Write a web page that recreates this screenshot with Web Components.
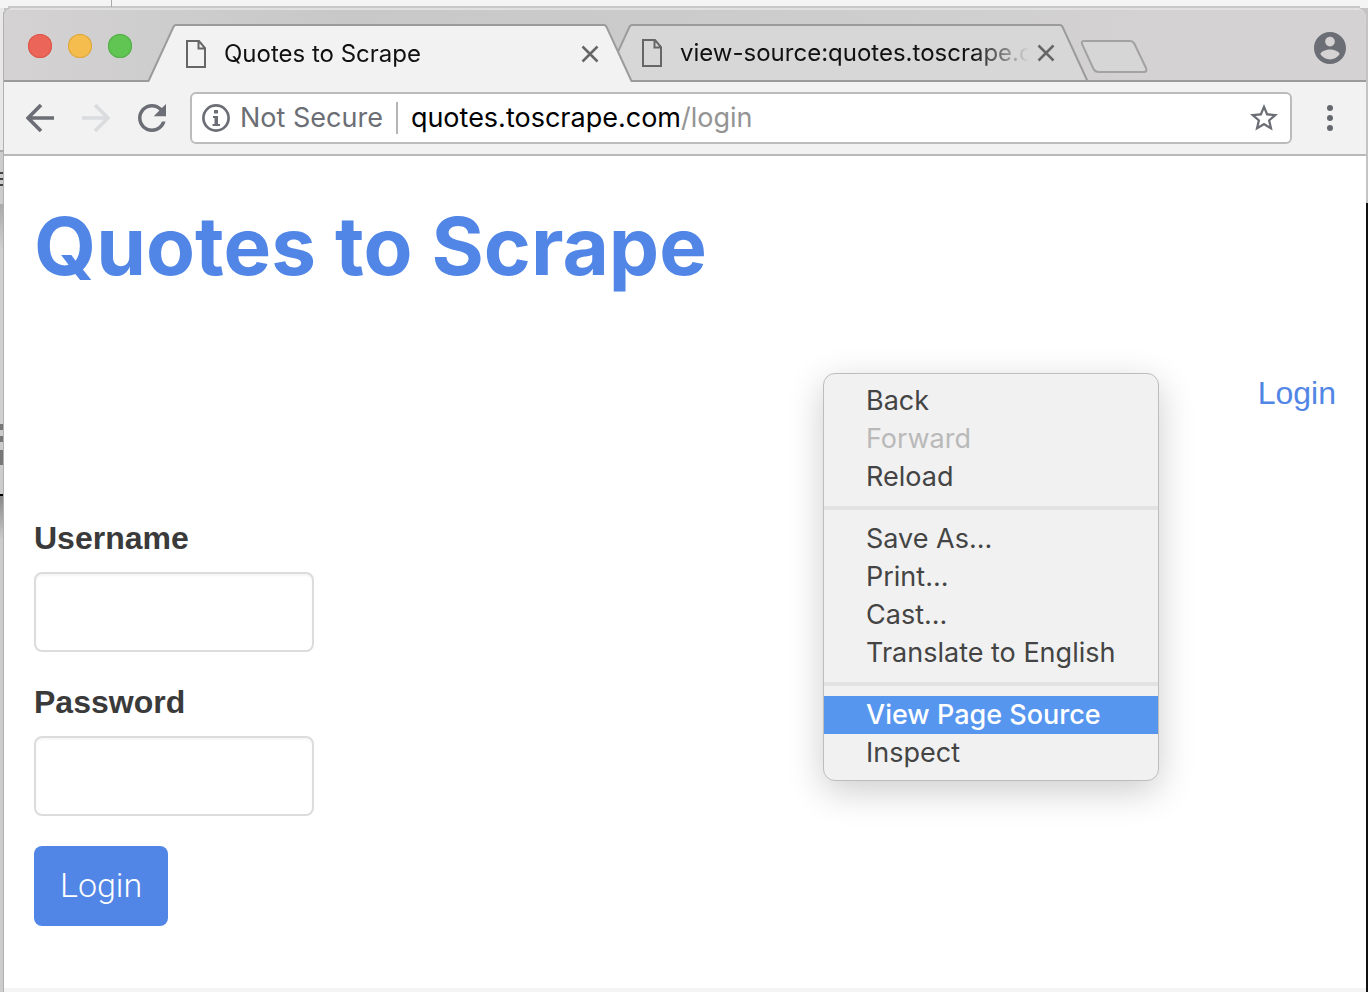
<!DOCTYPE html>
<html lang="en">
<head>
<meta charset="utf-8">
<meta name="viewport" content="width=device-width, initial-scale=1">
<title>Quotes to Scrape</title>
<style>
  html, body { margin: 0; min-height: 100%; }
  body { font-family: Inter, "Liberation Sans", sans-serif; color: #333; background: #c4c4c4; }
</style>
</head>
<body>
<browser-window>
  <tab-strip slot="tabs">
    <browser-tab active>Quotes to Scrape</browser-tab>
    <browser-tab>view-source:quotes.toscrape.com</browser-tab>
  </tab-strip>
  <browser-toolbar slot="toolbar"></browser-toolbar>
  <login-page></login-page>
  <context-menu slot="menu">
    <menu-entry>Back</menu-entry>
    <menu-entry disabled>Forward</menu-entry>
    <menu-entry>Reload</menu-entry>
    <menu-divider></menu-divider>
    <menu-entry>Save As...</menu-entry>
    <menu-entry>Print...</menu-entry>
    <menu-entry>Cast...</menu-entry>
    <menu-entry>Translate to English</menu-entry>
    <menu-divider></menu-divider>
    <menu-entry selected>View Page Source</menu-entry>
    <menu-entry>Inspect</menu-entry>
  </context-menu>
</browser-window>

<script>
const define = (name, html, setup) => {
  const template = document.createElement('template');
  template.innerHTML = html;
  customElements.define(name, class extends HTMLElement {
    constructor() {
      super();
      this.attachShadow({ mode: 'open' }).append(template.content.cloneNode(true));
    }
    connectedCallback() { if (setup) setup(this, this.shadowRoot); }
  });
};

define('browser-window', `
<style>
  :host {
    display: block; box-sizing: border-box; min-height: 100vh; padding: 8px 2px 0 4px;
    background:
      linear-gradient(#aaa, #aaa) 111px 0 / 1px 7px no-repeat,
      linear-gradient(#c8c8c8, #c8c8c8) 8px 6px / calc(100% - 16px) 2px no-repeat,
      linear-gradient(#f4f4f4, #f4f4f4) 0 0 / 100% 8px no-repeat,
      linear-gradient(#b0b0b0, #b0b0b0) 3px 12px / 1px 100% no-repeat,
      linear-gradient(#e8e8e8 0 150px, #aaa 150px 152px, #ccc 152px 172px, #444 172px 174px, #ccc 174px 178px, #444 178px 180px, #ccc 180px 184px, #444 184px 186px, #ccc 186px 204px, #aaa 204px, #d0d0d0 250px, #d0d0d0 424px, #777 424px 430px, #ccc 430px 436px, #777 436px 442px, #ccc 442px 450px, #777 450px 465px, #ccc 465px 494px, #000 494px 496px, #888 496px, #ccc 540px) 0 0 / 4px 100% no-repeat,
      linear-gradient(#c4c4c4 0 203px, #111 203px) 100% 0 / 2px 100% no-repeat;
  }
  .window {
    position: relative; display: grid; grid-template-rows: auto auto 1fr;
    min-height: calc(100vh - 8px); overflow: hidden;
    background: #fff; border-radius: 10px 10px 0 0;
  }
</style>
<div class="window">
  <slot name="tabs"></slot>
  <slot name="toolbar"></slot>
  <slot></slot>
  <slot name="menu"></slot>
</div>`);

define('tab-strip', `
<style>
  :host {
    display: flex; align-items: flex-end; height: 74px; box-sizing: border-box;
    border-top: 2px solid #e0e0e0;
    background: linear-gradient(#9b9b9b, #9b9b9b) 0 100% / 100% 2px no-repeat,
      linear-gradient(90deg, #d4d2d3, #c8c8c8 25%, #ccc 55%, #d4d2d3 85%);
  }
  button { border: 0; padding: 0; background: none; display: block; flex: none; }
  .lights { display: flex; gap: 16px; align-self: center; margin: 0 16px 0 24px; }
  .lights button { width: 24px; height: 24px; border-radius: 50%; }
  .close { background: #ec6559; box-shadow: inset 0 0 0 1px #d9544a; }
  .min { background: #f5bd4d; box-shadow: inset 0 0 0 1px #dba53f; }
  .max { background: #61c554; box-shadow: inset 0 0 0 1px #50ac44; }
  .tabs { display: flex; flex: 0 1 940px; min-width: 0; }
  .new { margin: 0 0 8px -8px; }
  .account { margin: 0 20px 18px auto; }
  svg { display: block; }
</style>
<div class="lights">
  <button class="close" aria-label="Close window"></button>
  <button class="min" aria-label="Minimise window"></button>
  <button class="max" aria-label="Zoom window"></button>
</div>
<div class="tabs"><slot></slot></div>
<button class="new" aria-label="New tab">
  <svg width="68" height="34" viewBox="0 0 68 34"><path d="M4 1H50Q53 1 54.500 4L66 28Q67.500 32 64 32H19Q15 32 13.500 29L2 4Q1 1 4 1Z" fill="#d6d6d6" stroke="#a2a2a2" stroke-width="2"/></svg>
</button>
<button class="account" aria-label="Account">
  <svg width="32" height="32" viewBox="2 2 20 20"><path fill="#6b6e75" d="M12 2C6.480 2 2 6.480 2 12s4.480 10 10 10 10-4.480 10-10S17.520 2 12 2zm0 3c1.660 0 3 1.340 3 3s-1.340 3-3 3-3-1.340-3-3 1.340-3 3-3zm0 14.200c-2.500 0-4.710-1.280-6-3.220.03-1.990 4-3.080 6-3.080 1.990 0 5.970 1.090 6 3.080-1.290 1.940-3.500 3.220-6 3.220z"/></svg>
</button>`);

define('browser-tab', `
<style>
  :host { --fill: #d7d7d7; display: flex; flex: 1 1 0; min-width: 0; height: 58px; color: #111; }
  :host(:not([active])) { margin-left: -28px; }
  :host([active]) { --fill: #f2f2f2; position: relative; z-index: 1; }
  .edge { display: block; flex: none; width: 28px; height: 58px; }
  .edge .shape { fill: var(--fill); }
  .edge .line { fill: none; stroke: #9b9b9b; stroke-width: 2; }
  .edge .base { stroke: #9b9b9b; stroke-width: 2; }
  :host([active]) .base { display: none; }
  .body {
    display: flex; align-items: center; flex: 1; min-width: 0; box-sizing: border-box;
    padding: 0 5px 0 10px; border-top: 2px solid #9b9b9b; background: var(--fill);
  }
  :host(:not([active])) .body { border-bottom: 2px solid #9b9b9b; }
  .page { flex: none; margin-right: 18px; }
  .title {
    flex: 1; min-width: 0; overflow: hidden; white-space: nowrap; font-size: 24px; line-height: 32px;
    -webkit-mask-image: linear-gradient(90deg, #000 calc(100% - 56px), transparent);
    mask-image: linear-gradient(90deg, #000 calc(100% - 56px), transparent);
  }
  button { flex: none; border: 0; padding: 0; margin-left: 8px; background: none; display: block; }
  svg { display: block; }
</style>
<svg class="edge" viewBox="0 0 28 58"><path class="shape" d="M0 58L25 4Q26 1 28 1V58Z"/><path class="base" d="M0 57H28"/><path class="line" d="M0 58L1 56L25 4Q26 1 28 1"/></svg>
<div class="body">
  <svg class="page" width="20" height="28" viewBox="0 0 20 28"><path d="M1 1H13L19 8V27H1ZM12.500 1V8.500H19" fill="none" stroke="#666" stroke-width="2"/></svg>
  <span class="title"><slot></slot></span>
  <button aria-label="Close tab"><svg width="18" height="18" viewBox="0 0 18 18"><path d="M1.500 1.500L16.500 16.500M16.500 1.500L1.500 16.500" stroke="#666" stroke-width="2.500"/></svg></button>
</div>
<svg class="edge" viewBox="0 0 28 58"><path class="shape" d="M0 1Q2 1 3 4L28 58H0Z"/><path class="base" d="M0 57H28"/><path class="line" d="M0 1Q2 1 3 4L27 56L28 58"/></svg>`);

define('browser-toolbar', `
<style>
  :host {
    display: flex; align-items: center; height: 74px; box-sizing: border-box; padding: 0 22px;
    background: #f2f2f2; border-bottom: 2px solid #b9b9b9;
  }
  button { border: 0; padding: 0; background: none; display: block; flex: none; }
  svg { display: block; }
  .nav { display: flex; gap: 28px; margin-right: 24px; }
  .box {
    display: flex; align-items: center; flex: 1; min-width: 0; height: 52px; box-sizing: border-box;
    padding: 0 12px 0 10px; margin-right: 24px;
    background: #fff; border: 2px solid #bcbcbc; border-radius: 6px; font-size: 27px; line-height: 36px;
  }
  .state { color: #6b6e75; margin: 0 13px 0 10px; white-space: nowrap; }
  .rule { width: 2px; height: 32px; background: #b5b5b5; margin-right: 13px; }
  .url { flex: 1; min-width: 0; outline: 0; white-space: nowrap; overflow: hidden; color: #000; }
  .path { color: #949494; }
</style>
<nav class="nav" aria-label="History">
  <button aria-label="Back"><svg width="28" height="28" viewBox="0 0 28 28"><path d="M28 14H3M15 1L2 14L15 27" fill="none" stroke="#6b6e75" stroke-width="3.600"/></svg></button>
  <button aria-label="Forward" disabled><svg width="28" height="28" viewBox="0 0 28 28"><path d="M0 14H25M13 1L26 14L13 27" fill="none" stroke="#dadce0" stroke-width="3.600"/></svg></button>
  <button aria-label="Reload"><svg width="28" height="28" viewBox="4 4 16 16"><path fill="#6b6e75" d="M17.650 6.350C16.200 4.900 14.210 4 12 4c-4.420 0-7.990 3.580-7.990 8s3.570 8 7.990 8c3.730 0 6.840-2.550 7.730-6h-2.080c-.82 2.330-3.040 4-5.650 4-3.310 0-6-2.690-6-6s2.690-6 6-6c1.660 0 3.140.69 4.220 1.780L13 11h7V4l-2.350 2.350z"/></svg></button>
</nav>
<div class="box">
  <svg width="28" height="28" viewBox="0 0 28 28"><circle cx="14" cy="14" r="12.600" fill="none" stroke="#6b6e75" stroke-width="2.700"/><path d="M12 6H16V9.500H12ZM11 12H16V20H18V22H10.500V20H12.500V14H11Z" fill="#6b6e75"/></svg>
  <span class="state">Not Secure</span>
  <span class="rule"></span>
  <div class="url" role="textbox" aria-label="Address" contenteditable="true" spellcheck="false">quotes.toscrape.com<span class="path">/login</span></div>
  <button aria-label="Bookmark"><svg width="28" height="28" viewBox="2 2 20 20"><path fill="#6b6e75" d="M22 9.240l-7.190-.62L12 2 9.190 8.630 2 9.240l5.460 4.730L5.820 21 12 17.270 18.180 21l-1.630-7.030L22 9.240zM12 15.400l-3.760 2.270 1-4.280-3.320-2.880 4.380-.38L12 6.100l1.710 4.040 4.380.38-3.320 2.880 1 4.280L12 15.400z"/></svg></button>
</div>
<button aria-label="Menu"><svg width="28" height="28" viewBox="0 0 28 28" fill="#65686e"><circle cx="14" cy="4" r="3"/><circle cx="14" cy="14" r="3"/><circle cx="14" cy="24" r="3"/></svg></button>`);

define('login-page', `
<style>
  :host {
    display: block; padding: 40px 30px 0; background: #fff; border-bottom: 4px solid #f4f4f4;
    font-family: "Liberation Sans", sans-serif; font-size: 32px; line-height: 40px;
  }
  h1 { margin: 0; font: 700 80px/100px Inter, sans-serif; }
  a { color: #5186e6; text-decoration: none; }
  .login { text-align: right; margin: 77px 0 105px; }
  form { display: flex; flex-direction: column; align-items: flex-start; gap: 30px; }
  button {
    height: 80px; padding: 0 26px 2px; border: 0; border-radius: 8px; background: #5186e6;
    color: #fff; font: 300 34px/40px Roboto, sans-serif;
  }
</style>
<h1><a href="/">Quotes to Scrape</a></h1>
<div class="login"><a href="/login">Login</a></div>
<form>
  <form-field label="Username" type="text"></form-field>
  <form-field label="Password" type="password"></form-field>
  <button type="button">Login</button>
</form>`);

define('form-field', `
<style>
  :host { display: flex; flex-direction: column; gap: 14px; }
  label { font-weight: 700; color: #3a3a3a; }
  input {
    width: 280px; height: 80px; box-sizing: border-box; padding: 0 24px; font: inherit; color: #555;
    border: 2px solid #dcdcdc; border-radius: 8px; background: #fff; box-shadow: inset 0 2px 2px rgba(0,0,0,.04);
  }
</style>
<label for="field"></label>
<input id="field">`, (host, root) => {
  root.querySelector('label').textContent = host.getAttribute('label');
  root.querySelector('input').type = host.getAttribute('type');
});

define('context-menu', `
<style>
  :host {
    position: absolute; left: 819px; top: 365px; width: 336px; box-sizing: border-box; z-index: 2;
    padding: 8px 0; background: #f1f1f1; border: 1px solid #bdbdbd; border-radius: 12px;
    box-shadow: 0 10px 36px rgba(0,0,0,.2);
  }
</style>
<div role="menu"><slot></slot></div>`);

define('menu-entry', `
<style>
  :host { display: block; }
  button {
    display: block; width: 100%; height: 38px; border: 0; padding: 0 0 1px 42px; background: none;
    text-align: left; font: 400 27px/36px Inter, sans-serif; color: #444;
  }
  :host([disabled]) button { color: #b9b9b9; }
  :host([selected]) button { background: #5796ef; color: #fff; font-weight: 500; }
</style>
<button role="menuitem"><slot></slot></button>`, (host, root) => {
  root.querySelector('button').disabled = host.hasAttribute('disabled');
});

define('menu-divider', `
<style>
  :host { display: block; padding: 10px 0; }
  hr { margin: 0; border: 0; height: 4px; background: #e2e2e2; }
</style>
<hr>`);
</script>
</body>
</html>
